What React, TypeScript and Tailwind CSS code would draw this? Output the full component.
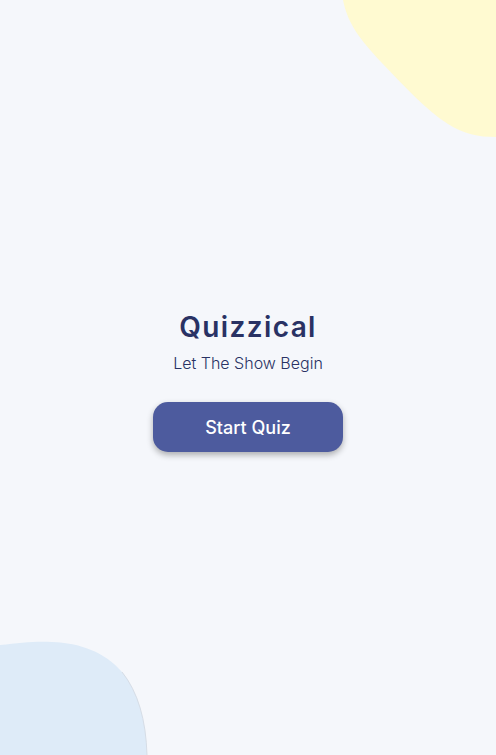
export default function App() {
  return (
    <div
      className="relative h-screen w-screen overflow-hidden bg-[#F5F7FB] flex flex-col items-center justify-center"
      style={{ fontFamily: 'Inter, "Noto Sans", sans-serif' }}
    >
      {/* yellow blob top right */}
      <svg className="absolute top-0 right-0" width="160" height="140" viewBox="0 0 160 140">
        <path
          d="M7 0 C12 25 25 40 45 62 C70 88 90 110 112 124 C128 134 142 137 160 137 L160 0 Z"
          fill="#FFFAD1"
        />
      </svg>
      {/* blue blob bottom left */}
      <svg className="absolute bottom-0 left-0" width="152" height="115" viewBox="0 0 152 115">
        <path
          d="M0 5 C20 3 35 1 52 2 C80 3 105 12 122 32 C138 52 146 80 147 115 L0 115 Z"
          fill="#DEEBF8"
        />
        <path
          d="M122 32 C138 52 146 80 147 115"
          fill="none"
          stroke="#d6dde6"
          strokeWidth="1"
        />
      </svg>

      <div className="relative flex flex-col items-center pt-[4px]">
        <h1 className="text-[28px] leading-[40px] font-semibold tracking-[1.4px] text-[#293264]">Quizzical</h1>
        <p className="mt-[6px] text-[16px] leading-[20px] font-light text-[#293264]">Let The Show Begin</p>
        <button className="mt-[29px] w-[190px] h-[50px] rounded-[15px] bg-[#4D5B9E] text-white text-[18px] font-medium shadow-[0_3px_6px_rgba(0,0,0,0.3)]">
          Start Quiz
        </button>
      </div>
    </div>
  )
}
